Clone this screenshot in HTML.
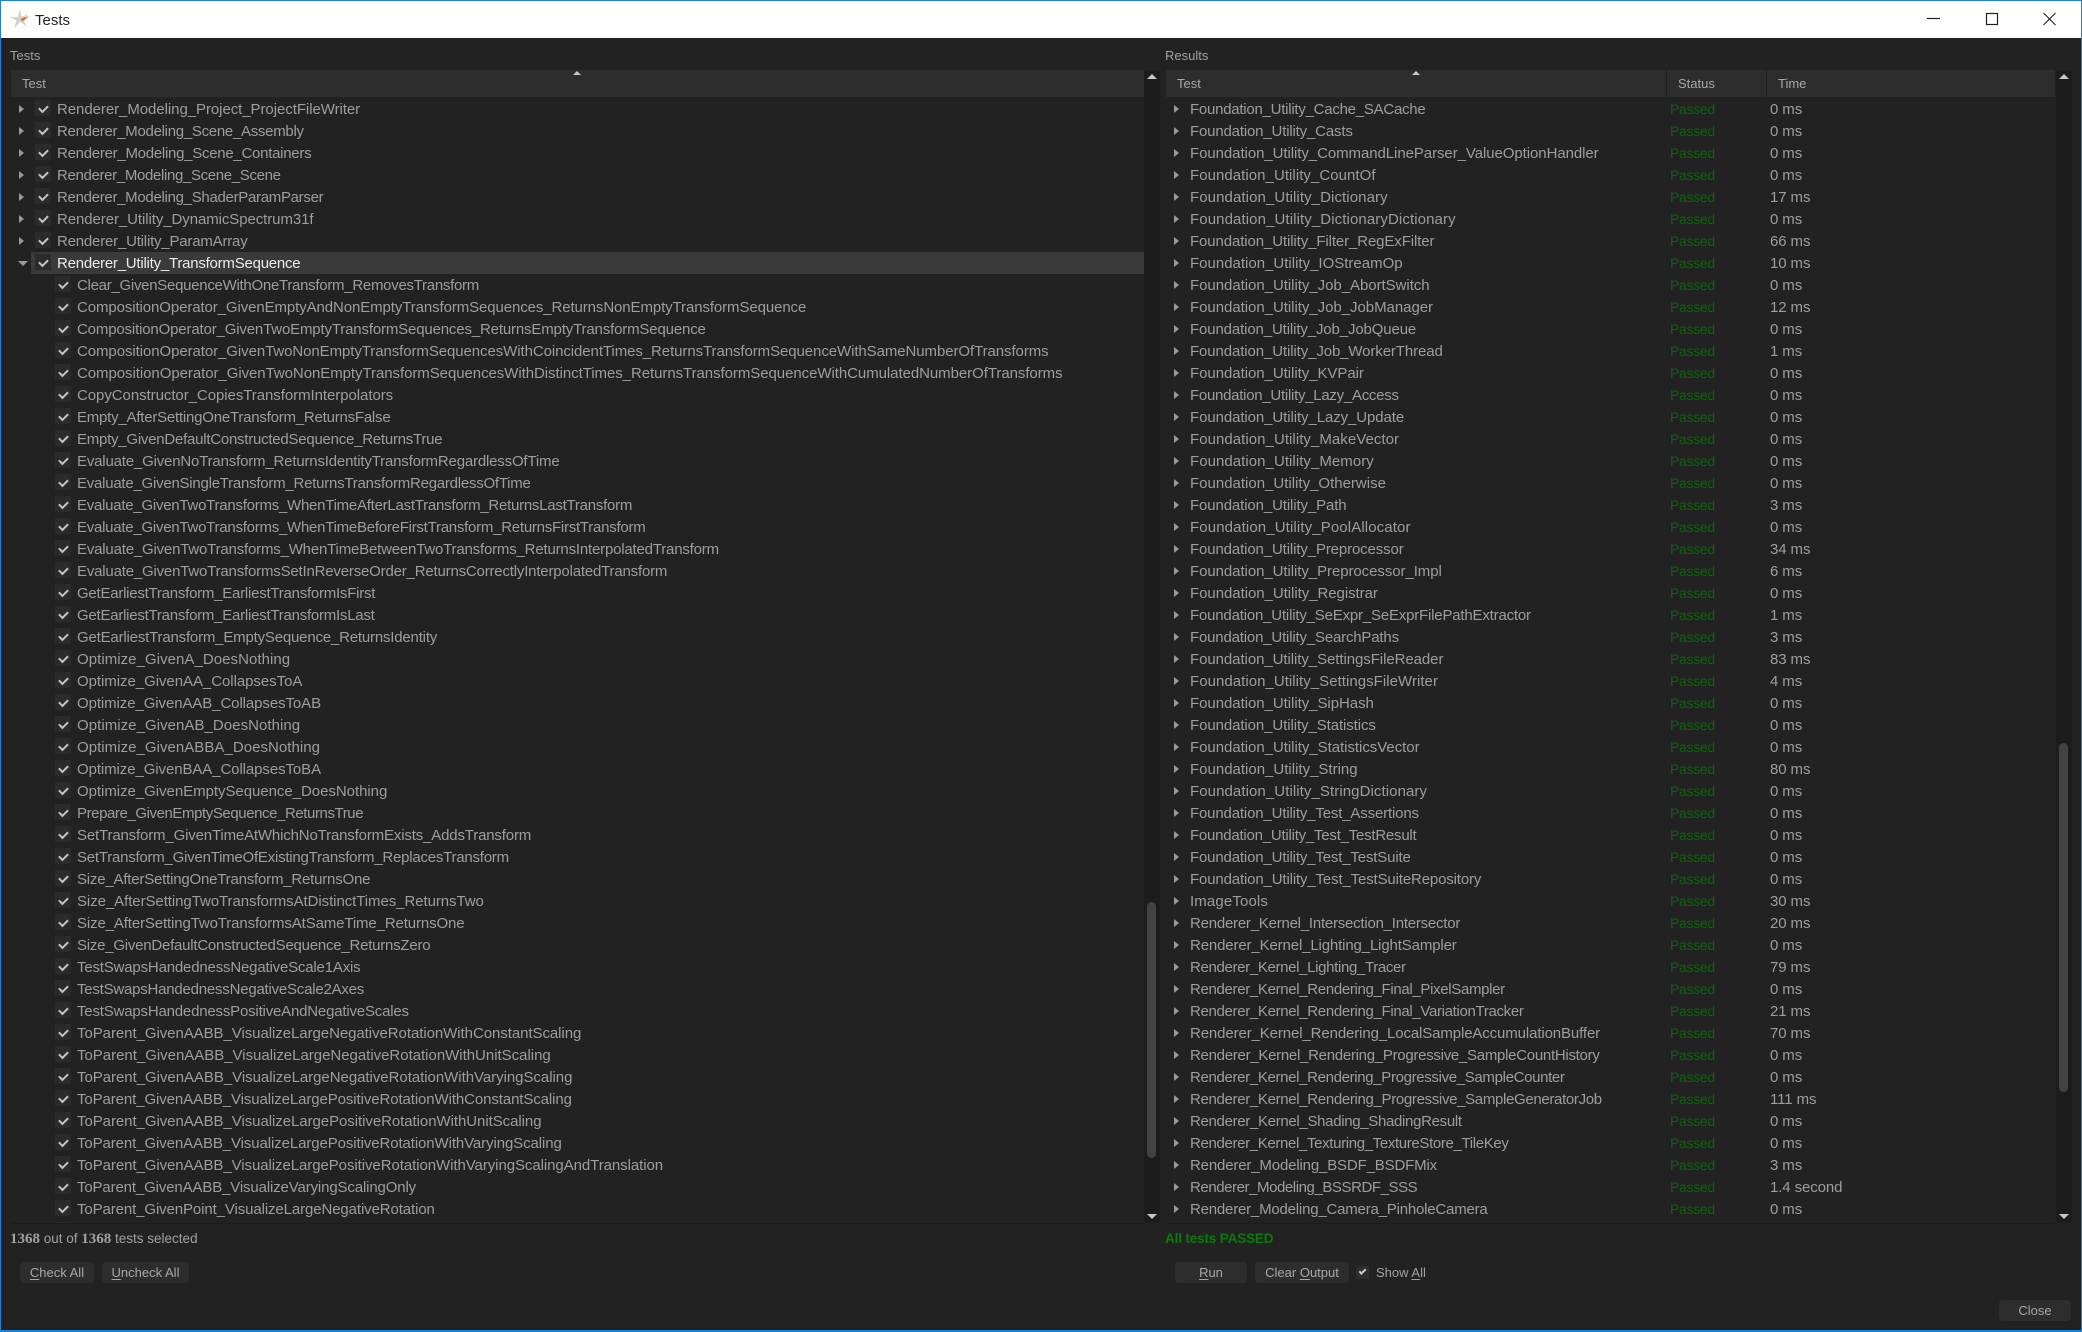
<!DOCTYPE html>
<html><head><meta charset="utf-8"><title>Tests</title>
<style>
*{box-sizing:border-box}
html,body{margin:0;padding:0;width:2082px;height:1332px;overflow:hidden;background:#222}
body{font-family:"Liberation Sans",sans-serif;font-size:15px;color:#9e9e9e;position:relative}
.a{position:absolute}
.win{left:0;top:0;width:2082px;height:1332px;border:1px solid #1b84d8;border-width:1px 1px 2px 1px}
.tb{left:1px;top:1px;width:2080px;height:37px;background:#fff}
.hdr{top:70px;height:27px;background:#2d2d2d;font-size:13px;line-height:27px;color:#a8a8a8}
.list{top:98px;height:1125px;overflow:hidden}
.list div{height:22px;line-height:24px;white-space:nowrap;position:relative}
#L div{padding-left:57px}
#L div.c{padding-left:77px}
#L div:before{content:"";position:absolute;left:35px;top:2px;width:16px;height:16px;background:#2b2b2b}
#L div.c:before{left:55px}
#L div:after{content:"";position:absolute;left:39px;top:7px;width:7px;height:4px;border-left:2px solid #c4c4c4;border-bottom:2px solid #c4c4c4;transform:rotate(-45deg)}
#L div.c:after{left:59px}
.arr{position:absolute;left:19px;top:7px;width:0;height:0;border-left:5px solid #999;border-top:4px solid transparent;border-bottom:4px solid transparent}
#L div.hl{background:#3a3a3a;color:#ececec;margin-left:31px;padding-left:26px}
#L div.hl:before{left:4px}
#L div.hl:after{left:8px}
.down{position:absolute;left:-13px;top:9px;width:0;height:0;border-top:5px solid #999;border-left:5px solid transparent;border-right:5px solid transparent}
#R div{padding-left:1190px}
#R{left:0;width:2054px}
#R i{font-style:normal;position:absolute;top:0;letter-spacing:-.1px}
#R i.s{left:1670px;top:-1px;color:#0b640b;font-size:14px;letter-spacing:-.3px}
#R i.t{left:1770px}
#R .arr{left:1174px}
.sb{top:70px;height:1153px;width:16px;background:#1c1c1c}
.th{width:9px;background:#424242;border-radius:5px}
.up,.dn{position:absolute;left:3px;width:0;height:0;border-left:5px solid transparent;border-right:5px solid transparent}
.up{top:4px;border-bottom:5px solid #c8c8c8}
.dn{bottom:4px;border-top:5px solid #c8c8c8}
.btn{top:1262px;height:21px;background:#2d2d2d;border-radius:4px;text-align:center;font-size:13px;line-height:21px;color:#a8a8a8}
.lbl{font-size:13px;color:#a2a2a2}
u{text-underline-offset:2px}
b{font-family:"Liberation Serif",serif;font-size:15px}
</style></head><body>
<div class="a win"></div>
<div class="a tb"></div>
<svg class="a" style="left:10px;top:9px" width="20" height="20" viewBox="0 0 20 20"><path d="M10 0l1.6 7.6L18 5l-5 5.2 4 8-6.6-5.4L4 19l2.4-7.6L0 8l7.6 0z" fill="#d2d2d2"/><path d="M11.5 9.5L19 7l-5.5 5-3-1z" fill="#ee6a1f"/></svg>
<div class="a" style="left:35px;top:12px;font-size:15px;line-height:18px;color:#222">Tests</div>
<svg class="a" style="left:1921px;top:8px" width="140" height="22" viewBox="0 0 140 22"><path d="M6 10.5h13" stroke="#222" stroke-width="1.2"/><rect x="65.5" y="5.5" width="11" height="11" fill="none" stroke="#222" stroke-width="1.2"/><path d="M122.5 5l12 12M134.5 5l-12 12" stroke="#222" stroke-width="1.1"/></svg>

<div class="a lbl" style="left:10px;top:48px;line-height:16px">Tests</div>
<div class="a lbl" style="left:1165px;top:48px;line-height:16px">Results</div>

<div class="a hdr" style="left:11px;width:1133px;padding-left:11px">Test</div>
<div class="a" style="left:573px;top:71px;border-left:4px solid transparent;border-right:4px solid transparent;border-bottom:4px solid #c8c8c8"></div>
<div class="a hdr" style="left:1166px;width:889px;padding-left:11px">Test</div>
<div class="a" style="left:1412px;top:71px;border-left:4px solid transparent;border-right:4px solid transparent;border-bottom:4px solid #c8c8c8"></div>
<div class="a" style="left:1666px;top:70px;width:1px;height:27px;background:#1f1f1f"></div>
<div class="a" style="left:1766px;top:70px;width:1px;height:27px;background:#1f1f1f"></div>
<div class="a" style="left:1678px;top:70px;font-size:13px;line-height:27px;color:#a8a8a8">Status</div>
<div class="a" style="left:1778px;top:70px;font-size:13px;line-height:27px;color:#a8a8a8">Time</div>

<div class="a" style="left:11px;top:1223px;width:1133px;height:1px;background:#1c1c1c"></div>
<div class="a" style="left:1166px;top:1223px;width:888px;height:1px;background:#1c1c1c"></div>

<div class="a list" id="L" style="left:0;width:1144px">
<div class="p" style="letter-spacing:-.06px"><span class="arr"></span>Renderer_Modeling_Project_ProjectFileWriter</div>
<div class="p" style="letter-spacing:-.29px"><span class="arr"></span>Renderer_Modeling_Scene_Assembly</div>
<div class="p" style="letter-spacing:-.27px"><span class="arr"></span>Renderer_Modeling_Scene_Containers</div>
<div class="p" style="letter-spacing:-.34px"><span class="arr"></span>Renderer_Modeling_Scene_Scene</div>
<div class="p" style="letter-spacing:-.3px"><span class="arr"></span>Renderer_Modeling_ShaderParamParser</div>
<div class="p" style="letter-spacing:-.08px"><span class="arr"></span>Renderer_Utility_DynamicSpectrum31f</div>
<div class="p" style="letter-spacing:-.2px"><span class="arr"></span>Renderer_Utility_ParamArray</div>
<div class="p hl" style="letter-spacing:-.23px"><span class="down"></span>Renderer_Utility_TransformSequence</div>
<div class="c" style="letter-spacing:-.28px">Clear_GivenSequenceWithOneTransform_RemovesTransform</div>
<div class="c" style="letter-spacing:-.1px">CompositionOperator_GivenEmptyAndNonEmptyTransformSequences_ReturnsNonEmptyTransformSequence</div>
<div class="c" style="letter-spacing:-.16px">CompositionOperator_GivenTwoEmptyTransformSequences_ReturnsEmptyTransformSequence</div>
<div class="c" style="letter-spacing:-.08px">CompositionOperator_GivenTwoNonEmptyTransformSequencesWithCoincidentTimes_ReturnsTransformSequenceWithSameNumberOfTransforms</div>
<div class="c" style="letter-spacing:-.06px">CompositionOperator_GivenTwoNonEmptyTransformSequencesWithDistinctTimes_ReturnsTransformSequenceWithCumulatedNumberOfTransforms</div>
<div class="c" style="letter-spacing:-.06px">CopyConstructor_CopiesTransformInterpolators</div>
<div class="c" style="letter-spacing:-.22px">Empty_AfterSettingOneTransform_ReturnsFalse</div>
<div class="c" style="letter-spacing:-.24px">Empty_GivenDefaultConstructedSequence_ReturnsTrue</div>
<div class="c" style="letter-spacing:-.18px">Evaluate_GivenNoTransform_ReturnsIdentityTransformRegardlessOfTime</div>
<div class="c" style="letter-spacing:-.24px">Evaluate_GivenSingleTransform_ReturnsTransformRegardlessOfTime</div>
<div class="c" style="letter-spacing:-.25px">Evaluate_GivenTwoTransforms_WhenTimeAfterLastTransform_ReturnsLastTransform</div>
<div class="c" style="letter-spacing:-.25px">Evaluate_GivenTwoTransforms_WhenTimeBeforeFirstTransform_ReturnsFirstTransform</div>
<div class="c" style="letter-spacing:-.19px">Evaluate_GivenTwoTransforms_WhenTimeBetweenTwoTransforms_ReturnsInterpolatedTransform</div>
<div class="c" style="letter-spacing:-.19px">Evaluate_GivenTwoTransformsSetInReverseOrder_ReturnsCorrectlyInterpolatedTransform</div>
<div class="c" style="letter-spacing:-.24px">GetEarliestTransform_EarliestTransformIsFirst</div>
<div class="c" style="letter-spacing:-.24px">GetEarliestTransform_EarliestTransformIsLast</div>
<div class="c" style="letter-spacing:-.19px">GetEarliestTransform_EmptySequence_ReturnsIdentity</div>
<div class="c" style="letter-spacing:.05px">Optimize_GivenA_DoesNothing</div>
<div class="c" style="letter-spacing:-.05px">Optimize_GivenAA_CollapsesToA</div>
<div class="c" style="letter-spacing:-.09px">Optimize_GivenAAB_CollapsesToAB</div>
<div class="c" style="letter-spacing:.05px">Optimize_GivenAB_DoesNothing</div>
<div class="c" style="letter-spacing:.04px">Optimize_GivenABBA_DoesNothing</div>
<div class="c" style="letter-spacing:-.09px">Optimize_GivenBAA_CollapsesToBA</div>
<div class="c" style="letter-spacing:-.04px">Optimize_GivenEmptySequence_DoesNothing</div>
<div class="c" style="letter-spacing:-.42px">Prepare_GivenEmptySequence_ReturnsTrue</div>
<div class="c" style="letter-spacing:-.16px">SetTransform_GivenTimeAtWhichNoTransformExists_AddsTransform</div>
<div class="c" style="letter-spacing:-.23px">SetTransform_GivenTimeOfExistingTransform_ReplacesTransform</div>
<div class="c" style="letter-spacing:-.2px">Size_AfterSettingOneTransform_ReturnsOne</div>
<div class="c" style="letter-spacing:-.07px">Size_AfterSettingTwoTransformsAtDistinctTimes_ReturnsTwo</div>
<div class="c" style="letter-spacing:-.13px">Size_AfterSettingTwoTransformsAtSameTime_ReturnsOne</div>
<div class="c" style="letter-spacing:-.23px">Size_GivenDefaultConstructedSequence_ReturnsZero</div>
<div class="c" style="letter-spacing:-.18px">TestSwapsHandednessNegativeScale1Axis</div>
<div class="c" style="letter-spacing:-.22px">TestSwapsHandednessNegativeScale2Axes</div>
<div class="c" style="letter-spacing:-.19px">TestSwapsHandednessPositiveAndNegativeScales</div>
<div class="c" style="letter-spacing:-.06px">ToParent_GivenAABB_VisualizeLargeNegativeRotationWithConstantScaling</div>
<div class="c" style="letter-spacing:-.02px">ToParent_GivenAABB_VisualizeLargeNegativeRotationWithUnitScaling</div>
<div class="c" style="letter-spacing:-.04px">ToParent_GivenAABB_VisualizeLargeNegativeRotationWithVaryingScaling</div>
<div class="c" style="letter-spacing:-.1px">ToParent_GivenAABB_VisualizeLargePositiveRotationWithConstantScaling</div>
<div class="c" style="letter-spacing:-.06px">ToParent_GivenAABB_VisualizeLargePositiveRotationWithUnitScaling</div>
<div class="c" style="letter-spacing:-.1px">ToParent_GivenAABB_VisualizeLargePositiveRotationWithVaryingScaling</div>
<div class="c" style="letter-spacing:-.07px">ToParent_GivenAABB_VisualizeLargePositiveRotationWithVaryingScalingAndTranslation</div>
<div class="c" style="letter-spacing:-.14px">ToParent_GivenAABB_VisualizeVaryingScalingOnly</div>
<div class="c" style="letter-spacing:-.11px">ToParent_GivenPoint_VisualizeLargeNegativeRotation</div>
<div class="c"></div>
</div>

<div class="a list" id="R">
<div style="letter-spacing:-.25px"><span class="arr"></span>Foundation_Utility_Cache_SACache<i class="s">Passed</i><i class="t">0 ms</i></div>
<div style="letter-spacing:-.17px"><span class="arr"></span>Foundation_Utility_Casts<i class="s">Passed</i><i class="t">0 ms</i></div>
<div style="letter-spacing:-.07px"><span class="arr"></span>Foundation_Utility_CommandLineParser_ValueOptionHandler<i class="s">Passed</i><i class="t">0 ms</i></div>
<div style="letter-spacing:.05px"><span class="arr"></span>Foundation_Utility_CountOf<i class="s">Passed</i><i class="t">0 ms</i></div>
<div style="letter-spacing:.09px"><span class="arr"></span>Foundation_Utility_Dictionary<i class="s">Passed</i><i class="t">17 ms</i></div>
<div style="letter-spacing:.1px"><span class="arr"></span>Foundation_Utility_DictionaryDictionary<i class="s">Passed</i><i class="t">0 ms</i></div>
<div style="letter-spacing:-.11px"><span class="arr"></span>Foundation_Utility_Filter_RegExFilter<i class="s">Passed</i><i class="t">66 ms</i></div>
<div><span class="arr"></span>Foundation_Utility_IOStreamOp<i class="s">Passed</i><i class="t">10 ms</i></div>
<div style="letter-spacing:-.04px"><span class="arr"></span>Foundation_Utility_Job_AbortSwitch<i class="s">Passed</i><i class="t">0 ms</i></div>
<div style="letter-spacing:-.04px"><span class="arr"></span>Foundation_Utility_Job_JobManager<i class="s">Passed</i><i class="t">12 ms</i></div>
<div style="letter-spacing:-.13px"><span class="arr"></span>Foundation_Utility_Job_JobQueue<i class="s">Passed</i><i class="t">0 ms</i></div>
<div style="letter-spacing:-.11px"><span class="arr"></span>Foundation_Utility_Job_WorkerThread<i class="s">Passed</i><i class="t">1 ms</i></div>
<div style="letter-spacing:-.05px"><span class="arr"></span>Foundation_Utility_KVPair<i class="s">Passed</i><i class="t">0 ms</i></div>
<div style="letter-spacing:-.27px"><span class="arr"></span>Foundation_Utility_Lazy_Access<i class="s">Passed</i><i class="t">0 ms</i></div>
<div style="letter-spacing:-.09px"><span class="arr"></span>Foundation_Utility_Lazy_Update<i class="s">Passed</i><i class="t">0 ms</i></div>
<div style="letter-spacing:.05px"><span class="arr"></span>Foundation_Utility_MakeVector<i class="s">Passed</i><i class="t">0 ms</i></div>
<div style="letter-spacing:.05px"><span class="arr"></span>Foundation_Utility_Memory<i class="s">Passed</i><i class="t">0 ms</i></div>
<div><span class="arr"></span>Foundation_Utility_Otherwise<i class="s">Passed</i><i class="t">0 ms</i></div>
<div style="letter-spacing:-.12px"><span class="arr"></span>Foundation_Utility_Path<i class="s">Passed</i><i class="t">3 ms</i></div>
<div style="letter-spacing:.12px"><span class="arr"></span>Foundation_Utility_PoolAllocator<i class="s">Passed</i><i class="t">0 ms</i></div>
<div style="letter-spacing:-.13px"><span class="arr"></span>Foundation_Utility_Preprocessor<i class="s">Passed</i><i class="t">34 ms</i></div>
<div style="letter-spacing:-.07px"><span class="arr"></span>Foundation_Utility_Preprocessor_Impl<i class="s">Passed</i><i class="t">6 ms</i></div>
<div style="letter-spacing:-.05px"><span class="arr"></span>Foundation_Utility_Registrar<i class="s">Passed</i><i class="t">0 ms</i></div>
<div style="letter-spacing:-.19px"><span class="arr"></span>Foundation_Utility_SeExpr_SeExprFilePathExtractor<i class="s">Passed</i><i class="t">1 ms</i></div>
<div style="letter-spacing:-.18px"><span class="arr"></span>Foundation_Utility_SearchPaths<i class="s">Passed</i><i class="t">3 ms</i></div>
<div style="letter-spacing:-.07px"><span class="arr"></span>Foundation_Utility_SettingsFileReader<i class="s">Passed</i><i class="t">83 ms</i></div>
<div style="letter-spacing:.04px"><span class="arr"></span>Foundation_Utility_SettingsFileWriter<i class="s">Passed</i><i class="t">4 ms</i></div>
<div style="letter-spacing:-.05px"><span class="arr"></span>Foundation_Utility_SipHash<i class="s">Passed</i><i class="t">0 ms</i></div>
<div style="letter-spacing:-.09px"><span class="arr"></span>Foundation_Utility_Statistics<i class="s">Passed</i><i class="t">0 ms</i></div>
<div style="letter-spacing:-.04px"><span class="arr"></span>Foundation_Utility_StatisticsVector<i class="s">Passed</i><i class="t">0 ms</i></div>
<div><span class="arr"></span>Foundation_Utility_String<i class="s">Passed</i><i class="t">80 ms</i></div>
<div style="letter-spacing:.08px"><span class="arr"></span>Foundation_Utility_StringDictionary<i class="s">Passed</i><i class="t">0 ms</i></div>
<div style="letter-spacing:-.16px"><span class="arr"></span>Foundation_Utility_Test_Assertions<i class="s">Passed</i><i class="t">0 ms</i></div>
<div style="letter-spacing:-.23px"><span class="arr"></span>Foundation_Utility_Test_TestResult<i class="s">Passed</i><i class="t">0 ms</i></div>
<div style="letter-spacing:-.16px"><span class="arr"></span>Foundation_Utility_Test_TestSuite<i class="s">Passed</i><i class="t">0 ms</i></div>
<div style="letter-spacing:-.15px"><span class="arr"></span>Foundation_Utility_Test_TestSuiteRepository<i class="s">Passed</i><i class="t">0 ms</i></div>
<div style="letter-spacing:.13px"><span class="arr"></span>ImageTools<i class="s">Passed</i><i class="t">30 ms</i></div>
<div style="letter-spacing:-.23px"><span class="arr"></span>Renderer_Kernel_Intersection_Intersector<i class="s">Passed</i><i class="t">20 ms</i></div>
<div style="letter-spacing:-.14px"><span class="arr"></span>Renderer_Kernel_Lighting_LightSampler<i class="s">Passed</i><i class="t">0 ms</i></div>
<div style="letter-spacing:-.34px"><span class="arr"></span>Renderer_Kernel_Lighting_Tracer<i class="s">Passed</i><i class="t">79 ms</i></div>
<div style="letter-spacing:-.33px"><span class="arr"></span>Renderer_Kernel_Rendering_Final_PixelSampler<i class="s">Passed</i><i class="t">0 ms</i></div>
<div style="letter-spacing:-.33px"><span class="arr"></span>Renderer_Kernel_Rendering_Final_VariationTracker<i class="s">Passed</i><i class="t">21 ms</i></div>
<div style="letter-spacing:-.12px"><span class="arr"></span>Renderer_Kernel_Rendering_LocalSampleAccumulationBuffer<i class="s">Passed</i><i class="t">70 ms</i></div>
<div style="letter-spacing:-.28px"><span class="arr"></span>Renderer_Kernel_Rendering_Progressive_SampleCountHistory<i class="s">Passed</i><i class="t">0 ms</i></div>
<div style="letter-spacing:-.34px"><span class="arr"></span>Renderer_Kernel_Rendering_Progressive_SampleCounter<i class="s">Passed</i><i class="t">0 ms</i></div>
<div style="letter-spacing:-.33px"><span class="arr"></span>Renderer_Kernel_Rendering_Progressive_SampleGeneratorJob<i class="s">Passed</i><i class="t">111 ms</i></div>
<div style="letter-spacing:-.32px"><span class="arr"></span>Renderer_Kernel_Shading_ShadingResult<i class="s">Passed</i><i class="t">0 ms</i></div>
<div style="letter-spacing:-.35px"><span class="arr"></span>Renderer_Kernel_Texturing_TextureStore_TileKey<i class="s">Passed</i><i class="t">0 ms</i></div>
<div style="letter-spacing:-.16px"><span class="arr"></span>Renderer_Modeling_BSDF_BSDFMix<i class="s">Passed</i><i class="t">3 ms</i></div>
<div style="letter-spacing:-.43px"><span class="arr"></span>Renderer_Modeling_BSSRDF_SSS<i class="s">Passed</i><i class="t">1.4 second</i></div>
<div style="letter-spacing:-.2px"><span class="arr"></span>Renderer_Modeling_Camera_PinholeCamera<i class="s">Passed</i><i class="t">0 ms</i></div>
</div>

<div class="a sb" style="left:1144px"><span class="up"></span><span class="dn"></span></div>
<div class="a th" style="left:1147px;top:902px;height:256px"></div>
<div class="a sb" style="left:2056px"><span class="up"></span><span class="dn"></span></div>
<div class="a th" style="left:2059px;top:743px;height:349px"></div>

<div class="a" style="left:10px;top:1231px;font-size:13.5px;line-height:16px;color:#a2a2a2"><b>1368</b> out of <b>1368</b> tests selected</div>
<div class="a" style="left:1165px;top:1231px;font-size:13.5px;line-height:16px;color:#0a7a0a;font-weight:bold;letter-spacing:-.15px">All tests PASSED</div>

<div class="a btn" style="left:20px;width:74px"><u>C</u>heck All</div>
<div class="a btn" style="left:102px;width:87px"><u>U</u>ncheck All</div>
<div class="a btn" style="left:1175px;width:72px"><u>R</u>un</div>
<div class="a btn" style="left:1255px;width:94px">Clear <u>O</u>utput</div>
<div class="a" style="left:1356px;top:1266px;width:13px;height:13px;background:#2d2d2d"></div>
<div class="a" style="left:1359px;top:1269px;width:7px;height:4px;border-left:2px solid #ccc;border-bottom:2px solid #ccc;transform:rotate(-45deg)"></div>
<div class="a lbl" style="left:1376px;top:1262px;line-height:21px">Show <u>A</u>ll</div>
<div class="a btn" style="left:1999px;top:1300px;width:72px">Close</div>
</body></html>
